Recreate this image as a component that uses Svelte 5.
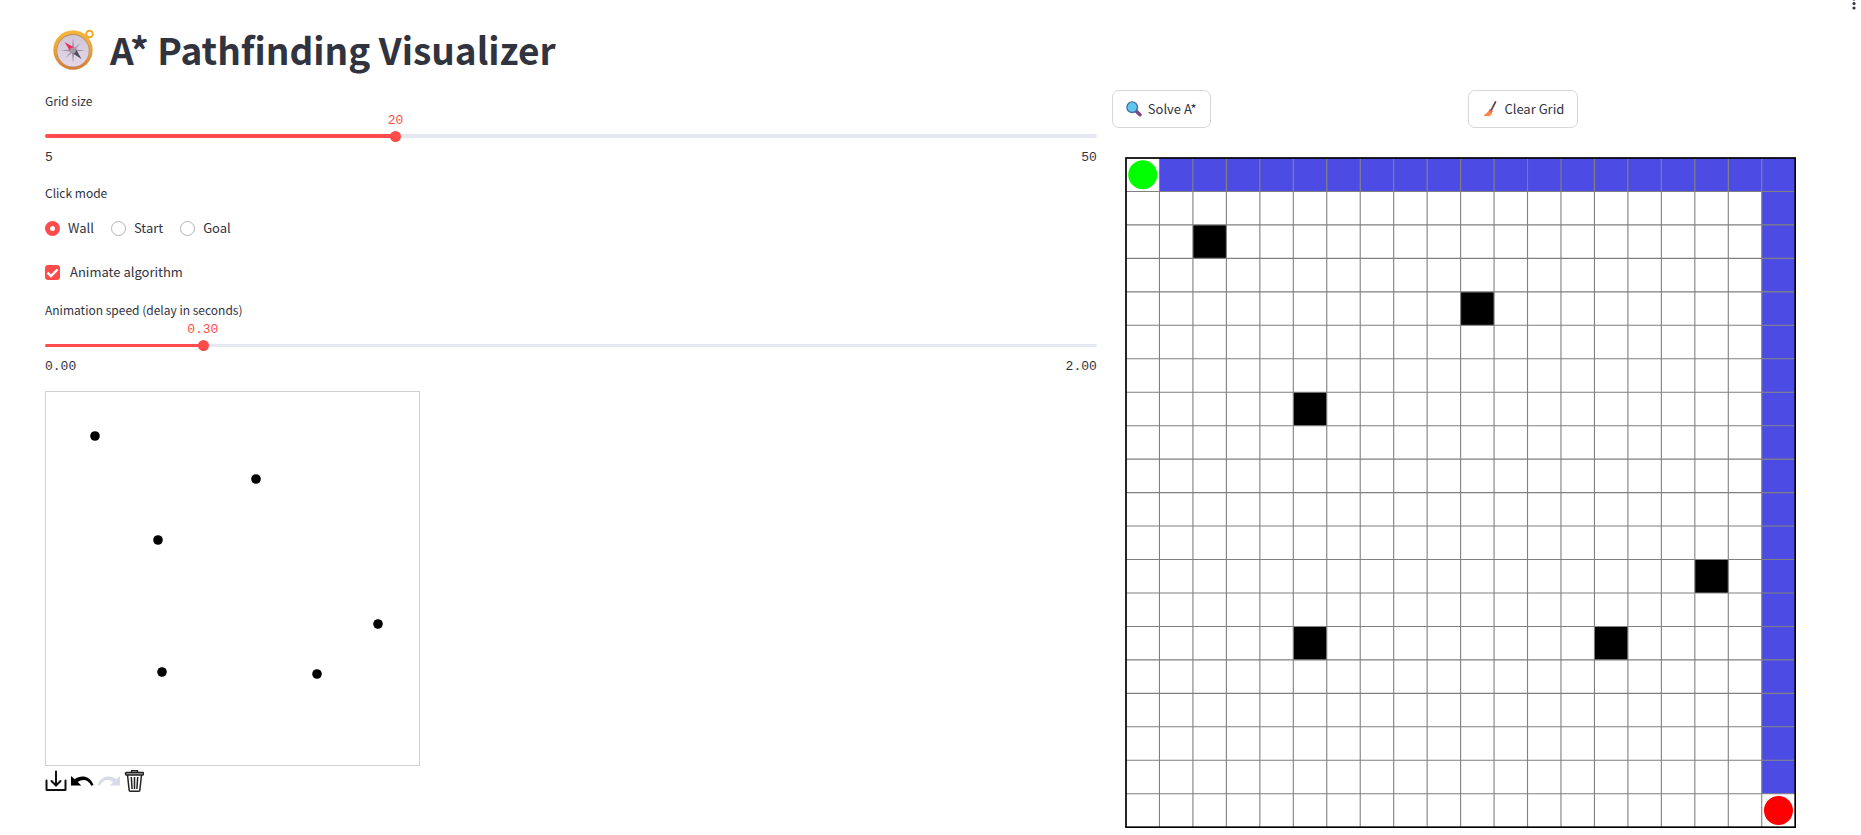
<script>
  let gridSize = $state(20);
  let mode = $state('Wall');
  let animate = $state(true);
  let delay = $state(0.3);

  const modes = ['Wall', 'Start', 'Goal'];
  const strokes = [[50, 45], [211, 88], [113, 149], [333, 233], [117, 281], [272, 283]];
  const walls = [[2, 2], [10, 4], [5, 7], [17, 12], [5, 14], [14, 14]];

  const count = 20;
  const origin = 1;
  const cell = 669 / count;
  const at = (n) => origin + n * cell;
  const path = [];
  for (let c = 1; c < count; c++) path.push([c, 0]);
  for (let r = 1; r < count - 1; r++) path.push([count - 1, r]);
  const lines = Array.from({ length: count - 1 }, (_, i) => at(i + 1));
</script>

<button class="menu" aria-label="Main menu">
  <svg viewBox="0 0 6 12" width="6" height="12"><g fill="#31333f"><circle cx="3" cy="-1" r="1.6" /><circle cx="3" cy="3.5" r="1.6" /><circle cx="3" cy="8" r="1.6" /></g></svg>
</button>

<main>
  <h1>
    <svg class="compass" viewBox="0 0 42 42" aria-hidden="true">
      <defs>
        <linearGradient id="rim" x1="0" y1="0" x2="0" y2="1"><stop offset="0" stop-color="#f4b83c" /><stop offset="0.55" stop-color="#e5a13a" /><stop offset="1" stop-color="#cf7c3c" /></linearGradient>
        <linearGradient id="face" x1="0" y1="0" x2="0" y2="1"><stop offset="0" stop-color="#cfc6d6" /><stop offset="1" stop-color="#e6d6ea" /></linearGradient>
      </defs>
      <g transform="translate(0 1)">
        <circle cx="36.5" cy="5" r="3.3" fill="none" stroke="#eda92f" stroke-width="2" />
        <circle cx="20" cy="21" r="19.7" fill="url(#rim)" />
        <circle cx="20" cy="21.5" r="16.4" fill="#b98a6a" />
        <circle cx="20" cy="21.8" r="15.8" fill="url(#face)" />
        <path d="M20 9l1.3 11.2L32 21.5 21.3 22.8 20 34l-1.3-11.2L8 21.5l10.7-1.3z" fill="#9d96a6" />
        <path d="M13 14.500l7 5 7-5-5 7 5 7-7-5-7 5 5-7z" fill="#aaa3b2" />
        <path d="M11.500 13l10.500 6-4 4.500z" fill="#ef2b62" />
        <path d="M28.500 30l-10-6.500 4-4z" fill="#504b59" />
        <circle cx="20" cy="21.500" r="2.900" fill="#a39ca8" />
      </g>
    </svg>
    A* Pathfinding Visualizer
  </h1>

  <div class="columns">
    <section class="controls">
      <div class="slider">
        <label for="size">Grid size</label>
        <div class="value"><output for="size" style="left: {((gridSize - 5) / 45) * 100}%">{gridSize}</output></div>
        <div class="rail"><div class="bar"><div class="fill" style="width: {((gridSize - 5) / 45) * 100}%"></div></div>
          <input id="size" type="range" min="5" max="50" bind:value={gridSize} /></div>
        <div class="ticks"><span>5</span><span>50</span></div>
      </div>

      <fieldset>
        <legend>Click mode</legend>
        <div class="radios">
          {#each modes as m}
            <label><input type="radio" name="mode" value={m} bind:group={mode} />{m}</label>
          {/each}
        </div>
      </fieldset>

      <label class="check">
        <span class="box"><input type="checkbox" bind:checked={animate} />
          <svg viewBox="0 0 15 15" aria-hidden="true"><path d="M2.500 7.600l3.500 3.400 6.500-6.500" fill="none" stroke="#fff" stroke-width="2.400" /></svg></span>
        Animate algorithm
      </label>

      <div class="slider thin">
        <label for="delay">Animation speed (delay in seconds)</label>
        <div class="value"><output for="delay" style="left: {(delay / 2) * 100}%">{delay.toFixed(2)}</output></div>
        <div class="rail"><div class="bar"><div class="fill" style="width: {(delay / 2) * 100}%"></div></div>
          <input id="delay" type="range" min="0" max="2" step="0.05" bind:value={delay} /></div>
        <div class="ticks"><span>0.00</span><span>2.00</span></div>
      </div>

      <div class="sketch">
        <svg class="pad" viewBox="0 0 375 375" role="img" aria-label="Drawing canvas">
          <rect x="0.5" y="0.5" width="374" height="374" fill="#fff" stroke="#d0d0d0" />
          {#each strokes as [x, y]}<circle cx={x} cy={y} r="4.800" />{/each}
        </svg>
        <div class="tools">
          <button aria-label="Send drawing">
            <svg viewBox="0 0 22 24" width="22" height="24"><g fill="none" stroke="#111" stroke-width="2" stroke-linecap="round"><path d="M1.500 11.500V20.500Q1.500 21 2 21H20Q20.500 21 20.500 20.500V11.500" /><path d="M11 2.500V15.500M6.500 12L11 16.500L15.500 12" stroke-width="2" /></g></svg>
          </button>
          <button aria-label="Undo">
            <svg viewBox="0 0 24 24" width="24" height="24"><path d="M1 7L4.700 10.200C10.500 6 19.500 6 23.500 16L21.300 16.700C18.500 10.500 12.500 9.500 7.700 13L11.300 16.500H1Z" fill="#000" /></svg>
          </button>
          <button aria-label="Redo" disabled>
            <svg viewBox="0 0 24 24" width="24" height="24"><path d="M23 7L19.300 10.200C13.500 6 4.500 6 .5 16L2.700 16.700C5.500 10.500 11.500 9.500 16.300 13L12.700 16.500H23Z" fill="#d8dce8" /></svg>
          </button>
          <button aria-label="Delete drawing">
            <svg viewBox="0 0 20 24" width="20" height="24"><g fill="none" stroke="#222" stroke-width="1.500" stroke-linejoin="round"><path d="M7.500 3.500V1.800H13.500V3.500" /><rect x="1.500" y="3.500" width="18" height="2.400" rx="0.800" fill="#aaa" /><path d="M3.500 6L5.200 21.500Q5.300 22.300 6.100 22.300H14.900Q15.700 22.300 15.800 21.500L17.500 6" /><path d="M7.300 8L8.100 20M10.500 8V20M13.700 8L12.900 20" /></g></svg>
          </button>
        </div>
      </div>
    </section>

    <section class="result">
      <div class="actions">
        <div><button class="action">
          <svg viewBox="0 0 16 16" width="16" height="16" aria-hidden="true"><path d="M9.500 9.500L14 13.800" stroke="#7c4681" stroke-width="3.400" stroke-linecap="round" /><circle cx="6.200" cy="6.200" r="5.300" fill="#5fc8ee" stroke="#486a9c" stroke-width="1.300" /></svg>
          Solve A*</button></div>
        <div><button class="action">
          <svg viewBox="0 0 16 16" width="16" height="16" aria-hidden="true"><path d="M13.500 1L9.300 9" stroke="#704050" stroke-width="1.700" stroke-linecap="round" /><path d="M7.500 8.700L10.300 10.500Q9.500 14.500 7 15.200L1.500 14.800Q5 12.500 7.500 8.700Z" fill="#f87b3c" /><path d="M7.800 8L10.800 9.900L10.300 11.100L7.100 9.100Z" fill="#c4555a" /><path d="M4.500 14.500L7 11.500M6.700 15L8.700 12" stroke="#ffad60" stroke-width=".7" /></svg>
          Clear Grid</button></div>
      </div>
      <svg class="board" viewBox="0 0 671 671" role="img" aria-label="Path grid">
        {#each path as [c, r]}<rect x={at(c)} y={at(r)} width={cell} height={cell} fill="#4c4ce4" />{/each}
        {#each walls as [c, r]}<rect x={at(c)} y={at(r)} width={cell} height={cell} />{/each}
        {#each lines as p}<path d="M{p} 1V670M1 {p}H670" stroke="#808080" stroke-width="1.100" />{/each}
        <rect x="1" y="1" width="669" height="669" fill="none" stroke="#000" stroke-width="1.700" />
        <circle cx={at(0.5)} cy={at(0.5)} r="14.500" fill="#0f0" />
        <circle cx={at(19.5)} cy={at(19.5)} r="14.500" fill="#f00" />
      </svg>
    </section>
  </div>
</main>

<style>
  :global(body) { margin: 0; background: #fff; }
  main {
    padding: 21px 48px 7px 45px;
    font: 13px/20px "Noto Sans CJK SC", "Noto Sans", sans-serif;
    color: #31333f;
  }
  button, input { font: inherit; color: inherit; margin: 0; }
  .menu { position: absolute; top: 0; right: 4px; padding: 0; border: 0; background: none; line-height: 0; }
  h1 { display: flex; align-items: center; gap: 15px; margin: 0; padding-left: 8px; height: 56px; font-size: 37px; line-height: 56px; font-weight: 700; }
  .compass { width: 42px; height: 42px; flex: none; overflow: visible; }
  .columns { display: grid; grid-template-columns: 3fr 2fr; gap: 15px; padding-top: 13px; }
  .controls { padding-top: 2px; }
  .slider label, legend { display: block; font-size: 12px; line-height: 18px; }
  .value { position: relative; height: 18px; margin-top: 1px; color: #ff4b4b; }
  output { position: absolute; top: 1px; transform: translateX(-50%); }
  .value, .ticks { font: 13px/18px "Liberation Mono", monospace; }
  .rail { display: grid; align-items: center; height: 14px; }
  .rail > * { grid-area: 1 / 1; }
  .bar { height: 4px; border-radius: 2px; background: #e5e8f0; overflow: hidden; }
  .thin .bar { height: 3px; }
  .fill { height: 100%; background: #ff4b4b; }
  input[type="range"] { appearance: none; margin: 0 -5px; height: 14px; background: none; min-width: 0; }
  input[type="range"]::-webkit-slider-thumb { appearance: none; width: 11px; height: 11px; border-radius: 50%; background: #ff4b4b; }
  .ticks { display: flex; justify-content: space-between; margin-top: 6px; }
  fieldset { border: 0; margin: 17px 0 24px; padding: 0; min-width: 0; }
  legend { padding: 0; }
  .radios { display: flex; gap: 17px; margin-top: 16px; }
  .radios label { display: flex; align-items: center; gap: 8px; }
  input[type="radio"] { appearance: none; box-sizing: border-box; width: 15px; height: 15px; border: 1px solid #b2b3b8; border-radius: 50%; }
  input[type="radio"]:checked { border: 5px solid #ff4b4b; }
  .check { display: flex; align-items: center; gap: 10px; width: fit-content; margin-bottom: 19px; }
  .box { display: grid; width: 15px; height: 15px; }
  .box > * { grid-area: 1 / 1; }
  input[type="checkbox"] { appearance: none; width: 15px; height: 15px; box-sizing: border-box; border: 1px solid #b2b3b8; border-radius: 3px; }
  input[type="checkbox"]:checked { border: 0; background: #ff4b4b; }
  .box svg { pointer-events: none; }
  .sketch { margin-top: 15px; width: 375px; max-width: 100%; }
  .pad { display: block; width: 100%; }
  .tools { display: flex; gap: 3px; padding-top: 3px; }
  .tools button { padding: 0; border: 0; background: none; line-height: 0; }
  .actions { display: grid; grid-template-columns: 1fr 1fr; gap: 12px; }
  .action { display: flex; align-items: center; gap: 6px; height: 38px; padding: 0 13px; border: 1px solid #d6d6d9; border-radius: 7px; background: #fff; white-space: nowrap; }
  .result { min-width: 0; }
  .board { display: block; box-sizing: border-box; width: 100%; padding: 29px 17px 0 13px; }
</style>
